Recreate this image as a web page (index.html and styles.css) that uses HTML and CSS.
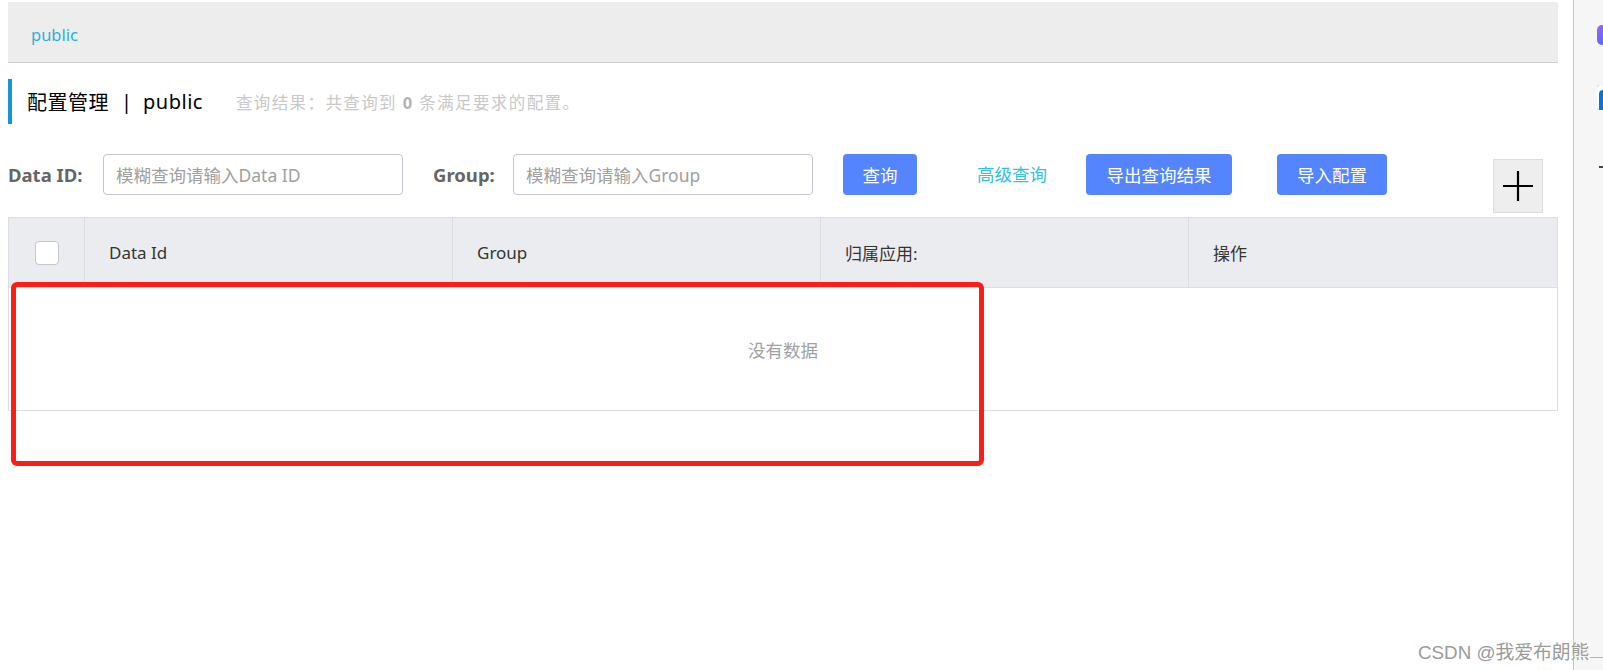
FILE: index.html
```html
<!DOCTYPE html>
<html lang="zh">
<head>
<meta charset="utf-8">
<title>配置管理</title>
<link rel="stylesheet" href="styles.css">
</head>
<body>
<div class="page">
  <div class="main">
    <div class="ns-bar"><span class="ns-item">public</span></div>
    <div class="title-row">
      <span class="title">配置管理</span>
      <span class="title-sep">|</span>
      <span class="title-ns">public</span>
      <span class="subtitle">查询结果：共查询到 <b>0</b> 条满足要求的配置。</span>
    </div>
    <div class="search-row">
      <label class="lbl lbl-id">Data ID:</label>
      <input class="inp" type="text" placeholder="模糊查询请输入Data ID">
      <label class="lbl lbl-group">Group:</label>
      <input class="inp" type="text" placeholder="模糊查询请输入Group">
      <button class="btn btn-query">查询</button>
      <a class="adv-link">高级查询</a>
      <button class="btn btn-export">导出查询结果</button>
      <button class="btn btn-import">导入配置</button>
      <button class="plus-btn" aria-label="add">
        <svg width="30" height="30" viewBox="0 0 30 30"><path d="M0 15H30M15 0V30" stroke="#000" stroke-width="2.2" fill="none"/></svg>
      </button>
    </div>
    <table class="tbl">
      <colgroup>
        <col class="c-check"><col class="c-col"><col class="c-col"><col class="c-col"><col>
      </colgroup>
      <thead>
        <tr>
          <th class="th-check"><span class="checkbox"></span></th>
          <th>Data Id</th>
          <th>Group</th>
          <th>归属应用:</th>
          <th>操作</th>
        </tr>
      </thead>
      <tbody>
        <tr><td class="empty" colspan="5">没有数据</td></tr>
      </tbody>
    </table>
  </div>
  <div class="side">
    <span class="side-ico ico-purple"></span>
    <span class="side-ico ico-blue"></span>
    <span class="side-dash"></span>
    <span class="side-line"></span>
  </div>
  <div class="red-mark"></div>
  <div class="watermark">CSDN @我爱布朗熊</div>
</div>
</body>
</html>
```

FILE: styles.css
```css
html, body {
  margin: 0;
  padding: 0;
  background: #fff;
  font-family: "Noto Sans", "Noto Sans CJK SC", sans-serif;
  color: #333;
}
.page {
  position: relative;
  display: flex;
  width: 1603px;
  height: 670px;
  overflow: hidden;
}
.main {
  flex: none;
  width: 1550px;
  padding: 2px 15px 0 8px;
}
.ns-bar {
  height: 60px;
  background: #ededed;
  border-bottom: 1px solid #cfcfcf;
  display: flex;
  align-items: center;
  padding-left: 23px;
}
.ns-item {
  font-size: 16.5px;
  color: #1fb4dc;
  margin-top: 5px;
}
.title-row {
  margin-top: 16px;
  height: 45px;
  border-left: 4px solid #1596d3;
  display: flex;
  align-items: center;
  padding-left: 15px;
}
.title, .title-ns {
  font-size: 20px;
  color: #000;
  letter-spacing: 0.5px;
}
.title-sep {
  font-size: 20px;
  color: #000;
  margin: 0 11px 0 12px;
}
.subtitle {
  margin-left: 33px;
  font-size: 16.5px;
  color: #c8c8c8;
  letter-spacing: 1.4px;
}
.subtitle b {
  color: #b4b4b4;
  font-weight: 700;
}
.search-row {
  margin-top: 30px;
  display: flex;
  align-items: flex-start;
  height: 59px;
}
.lbl {
  height: 41px;
  line-height: 41px;
  font-size: 18.5px;
  font-weight: 700;
  color: #666;
  margin-right: 20px;
  white-space: nowrap;
}
.lbl-id {
  width: 75px;
}
.lbl-group {
  margin-left: 30px;
  width: 60px;
}
.inp {
  box-sizing: border-box;
  width: 300px;
  height: 41px;
  border: 1px solid #c4c6cf;
  border-radius: 4px;
  padding: 0 12px;
  font-family: inherit;
  font-size: 17.5px;
  outline: none;
}
.inp::placeholder {
  color: #a0a0a0;
}
.btn {
  height: 41px;
  border: none;
  border-radius: 4px;
  background: #5584ff;
  color: #fff;
  font-family: inherit;
  font-size: 17.5px;
  padding: 0;
}
.btn-query {
  width: 74px;
  margin-left: 30px;
}
.adv-link {
  margin-left: 60px;
  height: 41px;
  line-height: 41px;
  font-size: 17.5px;
  color: #2ec3df;
  width: 71px;
  white-space: nowrap;
}
.btn-export {
  width: 146px;
  margin-left: 38px;
}
.btn-import {
  width: 110px;
  margin-left: 45px;
}
.plus-btn {
  margin-left: auto;
  margin-right: 15px;
  margin-top: 5px;
  width: 50px;
  height: 54px;
  box-sizing: border-box;
  background: #eeeeee;
  border: 1px solid #dcdcdc;
  padding: 0;
  display: flex;
  align-items: center;
  justify-content: center;
}
.tbl {
  margin-top: 4px;
  width: 1550px;
  border-collapse: collapse;
  table-layout: fixed;
  font-size: 17px;
}
.c-check { width: 76px; }
.c-col { width: 368px; }
.tbl th {
  height: 69px;
  background: #ebecf0;
  border: 1px solid #dcdee3;
  text-align: left;
  font-weight: 400;
  color: #333;
  padding: 0 0 0 24px;
}
.tbl th.th-check {
  padding: 0;
  text-align: center;
}
.checkbox {
  display: inline-block;
  vertical-align: middle;
  width: 22px;
  height: 22px;
  background: #fff;
  border: 1px solid #c4c6cf;
  border-radius: 4px;
}
.tbl td.empty {
  height: 122px;
  border: 1px solid #dcdee3;
  border-top: none;
  text-align: center;
  color: #a0a0a0;
  font-size: 17.5px;
  padding: 0;
}
.side {
  flex: 1;
  position: relative;
  border-left: 1px solid #c8c8c8;
  background: #f6f6f6;
}
.side-ico {
  position: absolute;
  left: 23px;
  width: 14px;
}
.ico-purple {
  top: 25px;
  height: 20px;
  border-radius: 5px;
  background: linear-gradient(135deg, #a163f5 0%, #5a6cf0 70%, #3f82f2 100%);
}
.ico-blue {
  top: 85px;
  height: 25px;
  border-radius: 3px;
  background: #0f72d2;
  box-shadow: inset 3px 6px 0 -1px #fff;
}
.side-dash {
  position: absolute;
  top: 166px;
  left: 25px;
  width: 8px;
  height: 2px;
  background: #444;
}
.side-line {
  position: absolute;
  top: 657px;
  left: 16px;
  width: 20px;
  height: 1px;
  background: #b5b5b5;
}
.red-mark {
  position: absolute;
  left: 11px;
  top: 282px;
  width: 963px;
  height: 174px;
  border: 5px solid #fb1e16;
  border-radius: 6px;
}
.watermark {
  position: absolute;
  left: 1418px;
  top: 637px;
  font-family: "Liberation Sans", "Noto Sans CJK SC", sans-serif;
  font-size: 18.8px;
  color: #9b9b9b;
  text-shadow: 0 0 1px #fff;
  white-space: nowrap;
}
```
